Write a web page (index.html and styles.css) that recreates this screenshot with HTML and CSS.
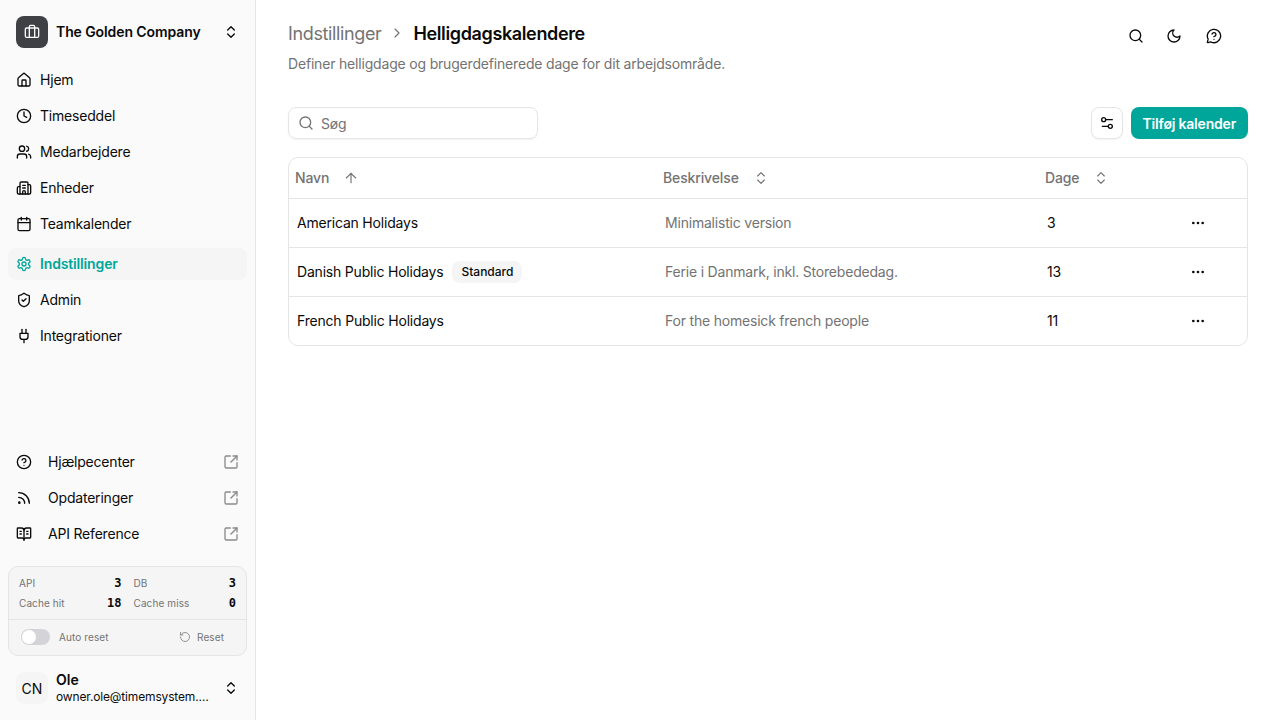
FILE: index.html
```html
<!DOCTYPE html>
<html lang="da">
<head>
    <meta charset="UTF-8">
    <title>Helligdagskalendere</title>
    <link rel="stylesheet" href="styles.css">
</head>
<body>
    <svg class="sprite" xmlns="http://www.w3.org/2000/svg">
        <symbol id="i-briefcase" viewBox="0 0 24 24"><path d="M16 20V4a2 2 0 0 0-2-2h-4a2 2 0 0 0-2 2v16"/><rect width="20" height="14" x="2" y="6" rx="2"/></symbol>
        <symbol id="i-updown" viewBox="0 0 24 24"><path d="m7 15 5 5 5-5"/><path d="m7 9 5-5 5 5"/></symbol>
        <symbol id="i-house" viewBox="0 0 24 24"><path d="M15 21v-8a1 1 0 0 0-1-1h-4a1 1 0 0 0-1 1v8"/><path d="M3 10a2 2 0 0 1 .709-1.528l7-5.999a2 2 0 0 1 2.582 0l7 5.999A2 2 0 0 1 21 10v9a2 2 0 0 1-2 2H5a2 2 0 0 1-2-2z"/></symbol>
        <symbol id="i-clock" viewBox="0 0 24 24"><circle cx="12" cy="12" r="10"/><path d="M12 6v6l4 2"/></symbol>
        <symbol id="i-users" viewBox="0 0 24 24"><path d="M16 21v-2a4 4 0 0 0-4-4H6a4 4 0 0 0-4 4v2"/><circle cx="9" cy="7" r="4"/><path d="M22 21v-2a4 4 0 0 0-3-3.87"/><path d="M16 3.13a4 4 0 0 1 0 7.75"/></symbol>
        <symbol id="i-building" viewBox="0 0 24 24"><path d="M10 12h4"/><path d="M10 8h4"/><path d="M14 21v-3a2 2 0 0 0-4 0v3"/><path d="M6 10H4a2 2 0 0 0-2 2v7a2 2 0 0 0 2 2h16a2 2 0 0 0 2-2V9a2 2 0 0 0-2-2h-2"/><path d="M6 21V5a2 2 0 0 1 2-2h8a2 2 0 0 1 2 2v16"/></symbol>
        <symbol id="i-calendar" viewBox="0 0 24 24"><path d="M8 2v4"/><path d="M16 2v4"/><rect width="18" height="18" x="3" y="4" rx="2"/><path d="M3 10h18"/></symbol>
        <symbol id="i-settings" viewBox="0 0 24 24"><path d="M12.22 2h-.44a2 2 0 0 0-2 2v.18a2 2 0 0 1-1 1.73l-.43.25a2 2 0 0 1-2 0l-.15-.08a2 2 0 0 0-2.73.73l-.22.38a2 2 0 0 0 .73 2.73l.15.1a2 2 0 0 1 1 1.72v.51a2 2 0 0 1-1 1.74l-.15.09a2 2 0 0 0-.73 2.73l.22.38a2 2 0 0 0 2.73.73l.15-.08a2 2 0 0 1 2 0l.43.25a2 2 0 0 1 1 1.73V20a2 2 0 0 0 2 2h.44a2 2 0 0 0 2-2v-.18a2 2 0 0 1 1-1.73l.43-.25a2 2 0 0 1 2 0l.15.08a2 2 0 0 0 2.73-.73l.22-.39a2 2 0 0 0-.73-2.73l-.15-.08a2 2 0 0 1-1-1.74v-.5a2 2 0 0 1 1-1.74l.15-.09a2 2 0 0 0 .73-2.73l-.22-.38a2 2 0 0 0-2.73-.73l-.15.08a2 2 0 0 1-2 0l-.43-.25a2 2 0 0 1-1-1.73V4a2 2 0 0 0-2-2z"/><circle cx="12" cy="12" r="3"/></symbol>
        <symbol id="i-shield" viewBox="0 0 24 24"><path d="M20 13c0 5-3.5 7.5-7.66 8.95a1 1 0 0 1-.67-.01C7.5 20.5 4 18 4 13V6a1 1 0 0 1 1-1c2 0 4.5-1.2 6.24-2.72a1.17 1.17 0 0 1 1.52 0C14.51 3.81 17 5 19 5a1 1 0 0 1 1 1z"/><path d="m9 12 2 2 4-4"/></symbol>
        <symbol id="i-plug" viewBox="0 0 24 24"><path d="M12 22v-5"/><path d="M9 8V2"/><path d="M15 8V2"/><path d="M18 8v5a4 4 0 0 1-4 4h-4a4 4 0 0 1-4-4V8Z"/></symbol>
        <symbol id="i-help" viewBox="0 0 24 24"><circle cx="12" cy="12" r="10"/><path d="M9.09 9a3 3 0 0 1 5.83 1c0 2-3 3-3 3"/><path d="M12 17h.01"/></symbol>
        <symbol id="i-rss" viewBox="0 0 24 24"><path d="M4 11a9 9 0 0 1 9 9"/><path d="M4 4a16 16 0 0 1 16 16"/><circle cx="5" cy="19" r="1"/></symbol>
        <symbol id="i-book" viewBox="0 0 24 24"><path d="M12 7v14"/><path d="M16 12h2"/><path d="M16 8h2"/><path d="M3 18a1 1 0 0 1-1-1V4a1 1 0 0 1 1-1h5a4 4 0 0 1 4 4 4 4 0 0 1 4-4h5a1 1 0 0 1 1 1v13a1 1 0 0 1-1 1h-6a3 3 0 0 0-3 3 3 3 0 0 0-3-3z"/><path d="M6 12h2"/><path d="M6 8h2"/></symbol>
        <symbol id="i-external" viewBox="0 0 24 24"><path d="M21 13v6a2 2 0 0 1-2 2H5a2 2 0 0 1-2-2V5a2 2 0 0 1 2-2h6"/><path d="m21 3-9 9"/><path d="M15 3h6v6"/></symbol>
        <symbol id="i-reset" viewBox="0 0 24 24"><path d="M3 12a9 9 0 1 0 9-9 9.75 9.75 0 0 0-6.74 2.74L3 8"/><path d="M3 3v5h5"/></symbol>
        <symbol id="i-search" viewBox="0 0 24 24"><path d="m21 21-4.34-4.34"/><circle cx="11" cy="11" r="8"/></symbol>
        <symbol id="i-moon" viewBox="0 0 24 24"><path d="M12 3a6 6 0 0 0 9 9 9 9 0 1 1-9-9Z"/></symbol>
        <symbol id="i-chat-help" viewBox="0 0 24 24"><path d="M2.992 16.342a2 2 0 0 1 .094 1.167l-1.065 3.29a1 1 0 0 0 1.236 1.168l3.413-.998a2 2 0 0 1 1.099.092 10 10 0 1 0-4.777-4.719"/><path d="M9.09 9a3 3 0 0 1 5.83 1c0 2-3 3-3 3"/><path d="M12 17h.01"/></symbol>
        <symbol id="i-sliders" viewBox="0 0 24 24"><path d="M20 7h-9"/><path d="M14 17H5"/><circle cx="17" cy="17" r="3"/><circle cx="7" cy="7" r="3"/></symbol>
        <symbol id="i-arrow-up" viewBox="0 0 24 24"><path d="m5 12 7-7 7 7"/><path d="M12 19V5"/></symbol>
        <symbol id="i-chevron" viewBox="0 0 24 24"><path d="m9 18 6-6-6-6"/></symbol>
        <symbol id="i-dots" viewBox="0 0 24 24"><circle cx="12" cy="12" r="1"/><circle cx="19" cy="12" r="1"/><circle cx="5" cy="12" r="1"/></symbol>
    </svg>

    <div class="app">
        <aside class="sidebar">
            <div class="company">
                <span class="company-logo"><svg class="icon"><use href="#i-briefcase"/></svg></span>
                <span class="company-name">The Golden Company</span>
                <svg class="icon"><use href="#i-updown"/></svg>
            </div>

            <nav class="nav">
                <a class="nav-item"><svg class="icon"><use href="#i-house"/></svg>Hjem</a>
                <a class="nav-item"><svg class="icon"><use href="#i-clock"/></svg>Timeseddel</a>
                <a class="nav-item"><svg class="icon"><use href="#i-users"/></svg>Medarbejdere</a>
                <a class="nav-item"><svg class="icon"><use href="#i-building"/></svg>Enheder</a>
                <a class="nav-item"><svg class="icon"><use href="#i-calendar"/></svg>Teamkalender</a>
            </nav>
            <nav class="nav nav-second">
                <a class="nav-item active"><svg class="icon"><use href="#i-settings"/></svg>Indstillinger</a>
                <a class="nav-item"><svg class="icon"><use href="#i-shield"/></svg>Admin</a>
                <a class="nav-item"><svg class="icon"><use href="#i-plug"/></svg>Integrationer</a>
            </nav>

            <nav class="nav nav-links">
                <a class="nav-item link-item"><svg class="icon"><use href="#i-help"/></svg><span class="link-label">Hjælpecenter</span><svg class="icon external"><use href="#i-external"/></svg></a>
                <a class="nav-item link-item"><svg class="icon"><use href="#i-rss"/></svg><span class="link-label">Opdateringer</span><svg class="icon external"><use href="#i-external"/></svg></a>
                <a class="nav-item link-item"><svg class="icon"><use href="#i-book"/></svg><span class="link-label">API Reference</span><svg class="icon external"><use href="#i-external"/></svg></a>
            </nav>

            <div class="stats">
                <div class="stats-grid">
                    <div class="stat"><span>API</span><b>3</b></div>
                    <div class="stat"><span>DB</span><b>3</b></div>
                    <div class="stat"><span>Cache hit</span><b>18</b></div>
                    <div class="stat"><span>Cache miss</span><b>0</b></div>
                </div>
                <div class="stats-footer">
                    <span class="toggle"><span class="toggle-knob"></span></span>
                    <span class="toggle-label">Auto reset</span>
                    <span class="reset"><svg class="icon"><use href="#i-reset"/></svg>Reset</span>
                </div>
            </div>

            <div class="user">
                <span class="avatar">CN</span>
                <span class="user-text">
                    <span class="user-name">Ole</span>
                    <span class="user-mail">owner.ole@timemsystem.…</span>
                </span>
                <svg class="icon"><use href="#i-updown"/></svg>
            </div>
        </aside>

        <main class="main">
            <header class="page-header">
                <div>
                    <div class="breadcrumb">
                        <span class="crumb">Indstillinger</span>
                        <svg class="icon crumb-sep"><use href="#i-chevron"/></svg>
                        <h1 class="crumb-current">Helligdagskalendere</h1>
                    </div>
                    <p class="subtitle">Definer helligdage og brugerdefinerede dage for dit arbejdsområde.</p>
                </div>
                <div class="top-actions">
                    <svg class="icon"><use href="#i-search"/></svg>
                    <svg class="icon"><use href="#i-moon"/></svg>
                    <svg class="icon last-action"><use href="#i-chat-help"/></svg>
                </div>
            </header>

            <div class="toolbar">
                <label class="search">
                    <svg class="icon"><use href="#i-search"/></svg>
                    <input type="text" placeholder="Søg">
                </label>
                <div class="toolbar-right">
                    <button class="btn-icon"><svg class="icon"><use href="#i-sliders"/></svg></button>
                    <button class="btn-primary">Tilføj kalender</button>
                </div>
            </div>

            <div class="table-wrap">
                <table class="table">
                    <thead>
                        <tr>
                            <th class="col-name"><span class="th-inner">Navn<svg class="icon"><use href="#i-arrow-up"/></svg></span></th>
                            <th class="col-desc"><span class="th-inner">Beskrivelse<svg class="icon"><use href="#i-updown"/></svg></span></th>
                            <th class="col-days"><span class="th-inner">Dage<svg class="icon"><use href="#i-updown"/></svg></span></th>
                            <th class="col-menu"></th>
                        </tr>
                    </thead>
                    <tbody>
                        <tr>
                            <td>American Holidays</td>
                            <td class="muted">Minimalistic version</td>
                            <td>3</td>
                            <td class="menu-cell"><svg class="icon"><use href="#i-dots"/></svg></td>
                        </tr>
                        <tr>
                            <td><span class="name-cell">Danish Public Holidays<span class="badge">Standard</span></span></td>
                            <td class="muted">Ferie i Danmark, inkl. Storebededag.</td>
                            <td>13</td>
                            <td class="menu-cell"><svg class="icon"><use href="#i-dots"/></svg></td>
                        </tr>
                        <tr>
                            <td>French Public Holidays</td>
                            <td class="muted">For the homesick french people</td>
                            <td>11</td>
                            <td class="menu-cell"><svg class="icon"><use href="#i-dots"/></svg></td>
                        </tr>
                    </tbody>
                </table>
            </div>
        </main>
    </div>
</body>
</html>
```

FILE: styles.css
```css
* {
    margin: 0;
    padding: 0;
    box-sizing: border-box;
}

body {
    font-family: Inter, "Liberation Sans", sans-serif;
    font-size: 14px;
    letter-spacing: -0.2px;
    color: #0a0a0a;
    background: #fff;
}

.sprite {
    display: none;
}

.icon {
    width: 16px;
    height: 16px;
    flex-shrink: 0;
    fill: none;
    stroke: currentColor;
    stroke-width: 2;
    stroke-linecap: round;
    stroke-linejoin: round;
}

.app {
    display: flex;
    height: 720px;
    overflow: hidden;
}

/* Sidebar */
.sidebar {
    width: 256px;
    flex-shrink: 0;
    display: flex;
    flex-direction: column;
    padding: 16px 8px;
    background: #fafafa;
    border-right: 1px solid #e5e5e5;
}

.company {
    display: flex;
    align-items: center;
    height: 32px;
    padding: 0 8px;
}

.company-logo {
    width: 32px;
    height: 32px;
    display: flex;
    align-items: center;
    justify-content: center;
    border-radius: 8px;
    background: #3f3f46;
    color: #fafafa;
}

.company-name {
    flex: 1;
    margin-left: 8px;
    font-weight: 600;
    line-height: 18px;
    letter-spacing: -0.1px;
}

.nav {
    display: flex;
    flex-direction: column;
    gap: 4px;
    margin-top: 16px;
}

.nav-second {
    margin-top: 8px;
}

.nav-links {
    margin-top: auto;
}

.nav-item {
    display: flex;
    align-items: center;
    gap: 8px;
    height: 32px;
    padding: 0 8px;
    border-radius: 8px;
    line-height: 18px;
    color: #0a0a0a;
}

.nav-item.active {
    background: #f5f5f5;
    color: #00a699;
    font-weight: 600;
    letter-spacing: -0.15px;
}

.link-item {
    gap: 16px;
}

.link-label {
    flex: 1;
}

.external {
    color: #8a8a8a;
}

.stats {
    margin-top: 16px;
    border: 1px solid #e5e5e5;
    border-radius: 10px;
    background: #f5f5f5;
    font-size: 10px;
    letter-spacing: 0.1px;
    color: #737373;
}

.stats-grid {
    display: grid;
    grid-template-columns: 1fr 1fr;
    align-content: start;
    column-gap: 12px;
    row-gap: 8px;
    height: 53px;
    padding: 10px 10px 0;
    border-bottom: 1px solid #e5e5e5;
}

.stat {
    display: flex;
    align-items: center;
    justify-content: space-between;
    height: 12px;
}

.stat b {
    font-family: "DejaVu Sans Mono", monospace;
    font-size: 12px;
    font-weight: 700;
    letter-spacing: 0;
    color: #0a0a0a;
}

.stats-footer {
    display: flex;
    align-items: center;
    height: 35px;
    padding: 0 22px 2px 12px;
}

.toggle {
    width: 29px;
    height: 16px;
    padding: 1px;
    border-radius: 8px;
    background: #d4d4d8;
}

.toggle-knob {
    display: block;
    width: 14px;
    height: 14px;
    border-radius: 50%;
    background: #fff;
}

.toggle-label {
    flex: 1;
    margin-left: 9px;
}

.reset {
    display: flex;
    align-items: center;
    gap: 6px;
}

.reset .icon {
    width: 12px;
    height: 12px;
    stroke-width: 1.5;
}

.user {
    display: flex;
    align-items: center;
    height: 32px;
    margin-top: 16px;
    padding: 0 8px;
}

.avatar {
    width: 32px;
    height: 32px;
    display: flex;
    align-items: center;
    justify-content: center;
    border-radius: 8px;
    background: #f5f5f5;
    letter-spacing: 0;
}

.user-text {
    flex: 1;
    min-width: 0;
    margin: 0 12px 0 8px;
    display: flex;
    flex-direction: column;
}

.user-name {
    font-weight: 600;
    line-height: 16px;
    margin-bottom: 1px;
    letter-spacing: 0;
}

.user-mail {
    font-size: 12px;
    line-height: 16px;
    letter-spacing: -0.15px;
    white-space: nowrap;
}

/* Main */
.main {
    flex: 1;
    min-width: 0;
    padding: 0 32px;
}

.page-header {
    display: flex;
    justify-content: space-between;
    padding-top: 21px;
}

.breadcrumb {
    display: flex;
    align-items: center;
    height: 24px;
    letter-spacing: -0.37px;
}

.crumb {
    font-size: 18px;
    color: #737373;
}

.crumb-sep {
    margin: 0 8px;
    stroke-width: 1.75;
    color: #737373;
}

.crumb-current {
    font-size: 18px;
    font-weight: 600;
}

.subtitle {
    margin-top: 10px;
    line-height: 18px;
    letter-spacing: -0.185px;
    color: #737373;
}

.top-actions {
    display: flex;
    gap: 22px;
    padding: 7px 26px 0 0;
}

.last-action {
    margin-left: 2px;
}

.toolbar {
    display: flex;
    align-items: center;
    justify-content: space-between;
    margin-top: 34px;
}

.search {
    width: 250px;
    height: 32px;
    display: flex;
    align-items: center;
    gap: 7px;
    padding: 0 9px;
    border: 1px solid #e5e5e5;
    border-radius: 8px;
    color: #737373;
    box-shadow: 0 1px 2px rgba(0, 0, 0, 0.05);
}

.search input {
    flex: 1;
    min-width: 0;
    border: none;
    outline: none;
    background: none;
    font: inherit;
    letter-spacing: inherit;
}

.search input::placeholder {
    color: #737373;
}

.toolbar-right {
    display: flex;
    gap: 8px;
}

.btn-icon {
    width: 32px;
    height: 32px;
    display: flex;
    align-items: center;
    justify-content: center;
    border: 1px solid #e5e5e5;
    border-radius: 8px;
    background: #fff;
    color: #0a0a0a;
    box-shadow: 0 1px 2px rgba(0, 0, 0, 0.05);
}

.btn-primary {
    height: 32px;
    padding: 0 12px;
    border: none;
    border-radius: 8px;
    background: #00a699;
    color: #fff;
    font-family: inherit;
    font-size: 14px;
    font-weight: 600;
    letter-spacing: -0.2px;
}

.table-wrap {
    margin-top: 18px;
    border: 1px solid #e5e5e5;
    border-radius: 10px;
    overflow: hidden;
}

.table {
    width: 100%;
    border-collapse: collapse;
    table-layout: fixed;
}

.table th {
    height: 40px;
    padding: 0 6px;
    text-align: left;
    font-weight: 500;
    letter-spacing: -0.13px;
    color: #737373;
}

.th-inner {
    display: flex;
    align-items: center;
    gap: 14px;
}

.th-inner .icon {
    stroke-width: 1.75;
}

.col-name {
    width: 368px;
}

.col-desc {
    width: 382px;
}

.col-days {
    width: 128px;
}

.table td {
    height: 49px;
    padding: 0 8px;
    border-top: 1px solid #e5e5e5;
}

.muted {
    color: #737373;
}

.menu-cell .icon {
    display: block;
    margin-left: 15px;
}

.name-cell {
    display: flex;
    align-items: center;
    gap: 8px;
}

.badge {
    height: 22px;
    margin-left: 1px;
    padding: 0 9px;
    line-height: 22px;
    border-radius: 8px;
    background: #f5f5f5;
    font-size: 12px;
    font-weight: 500;
    letter-spacing: 0;
}
```
